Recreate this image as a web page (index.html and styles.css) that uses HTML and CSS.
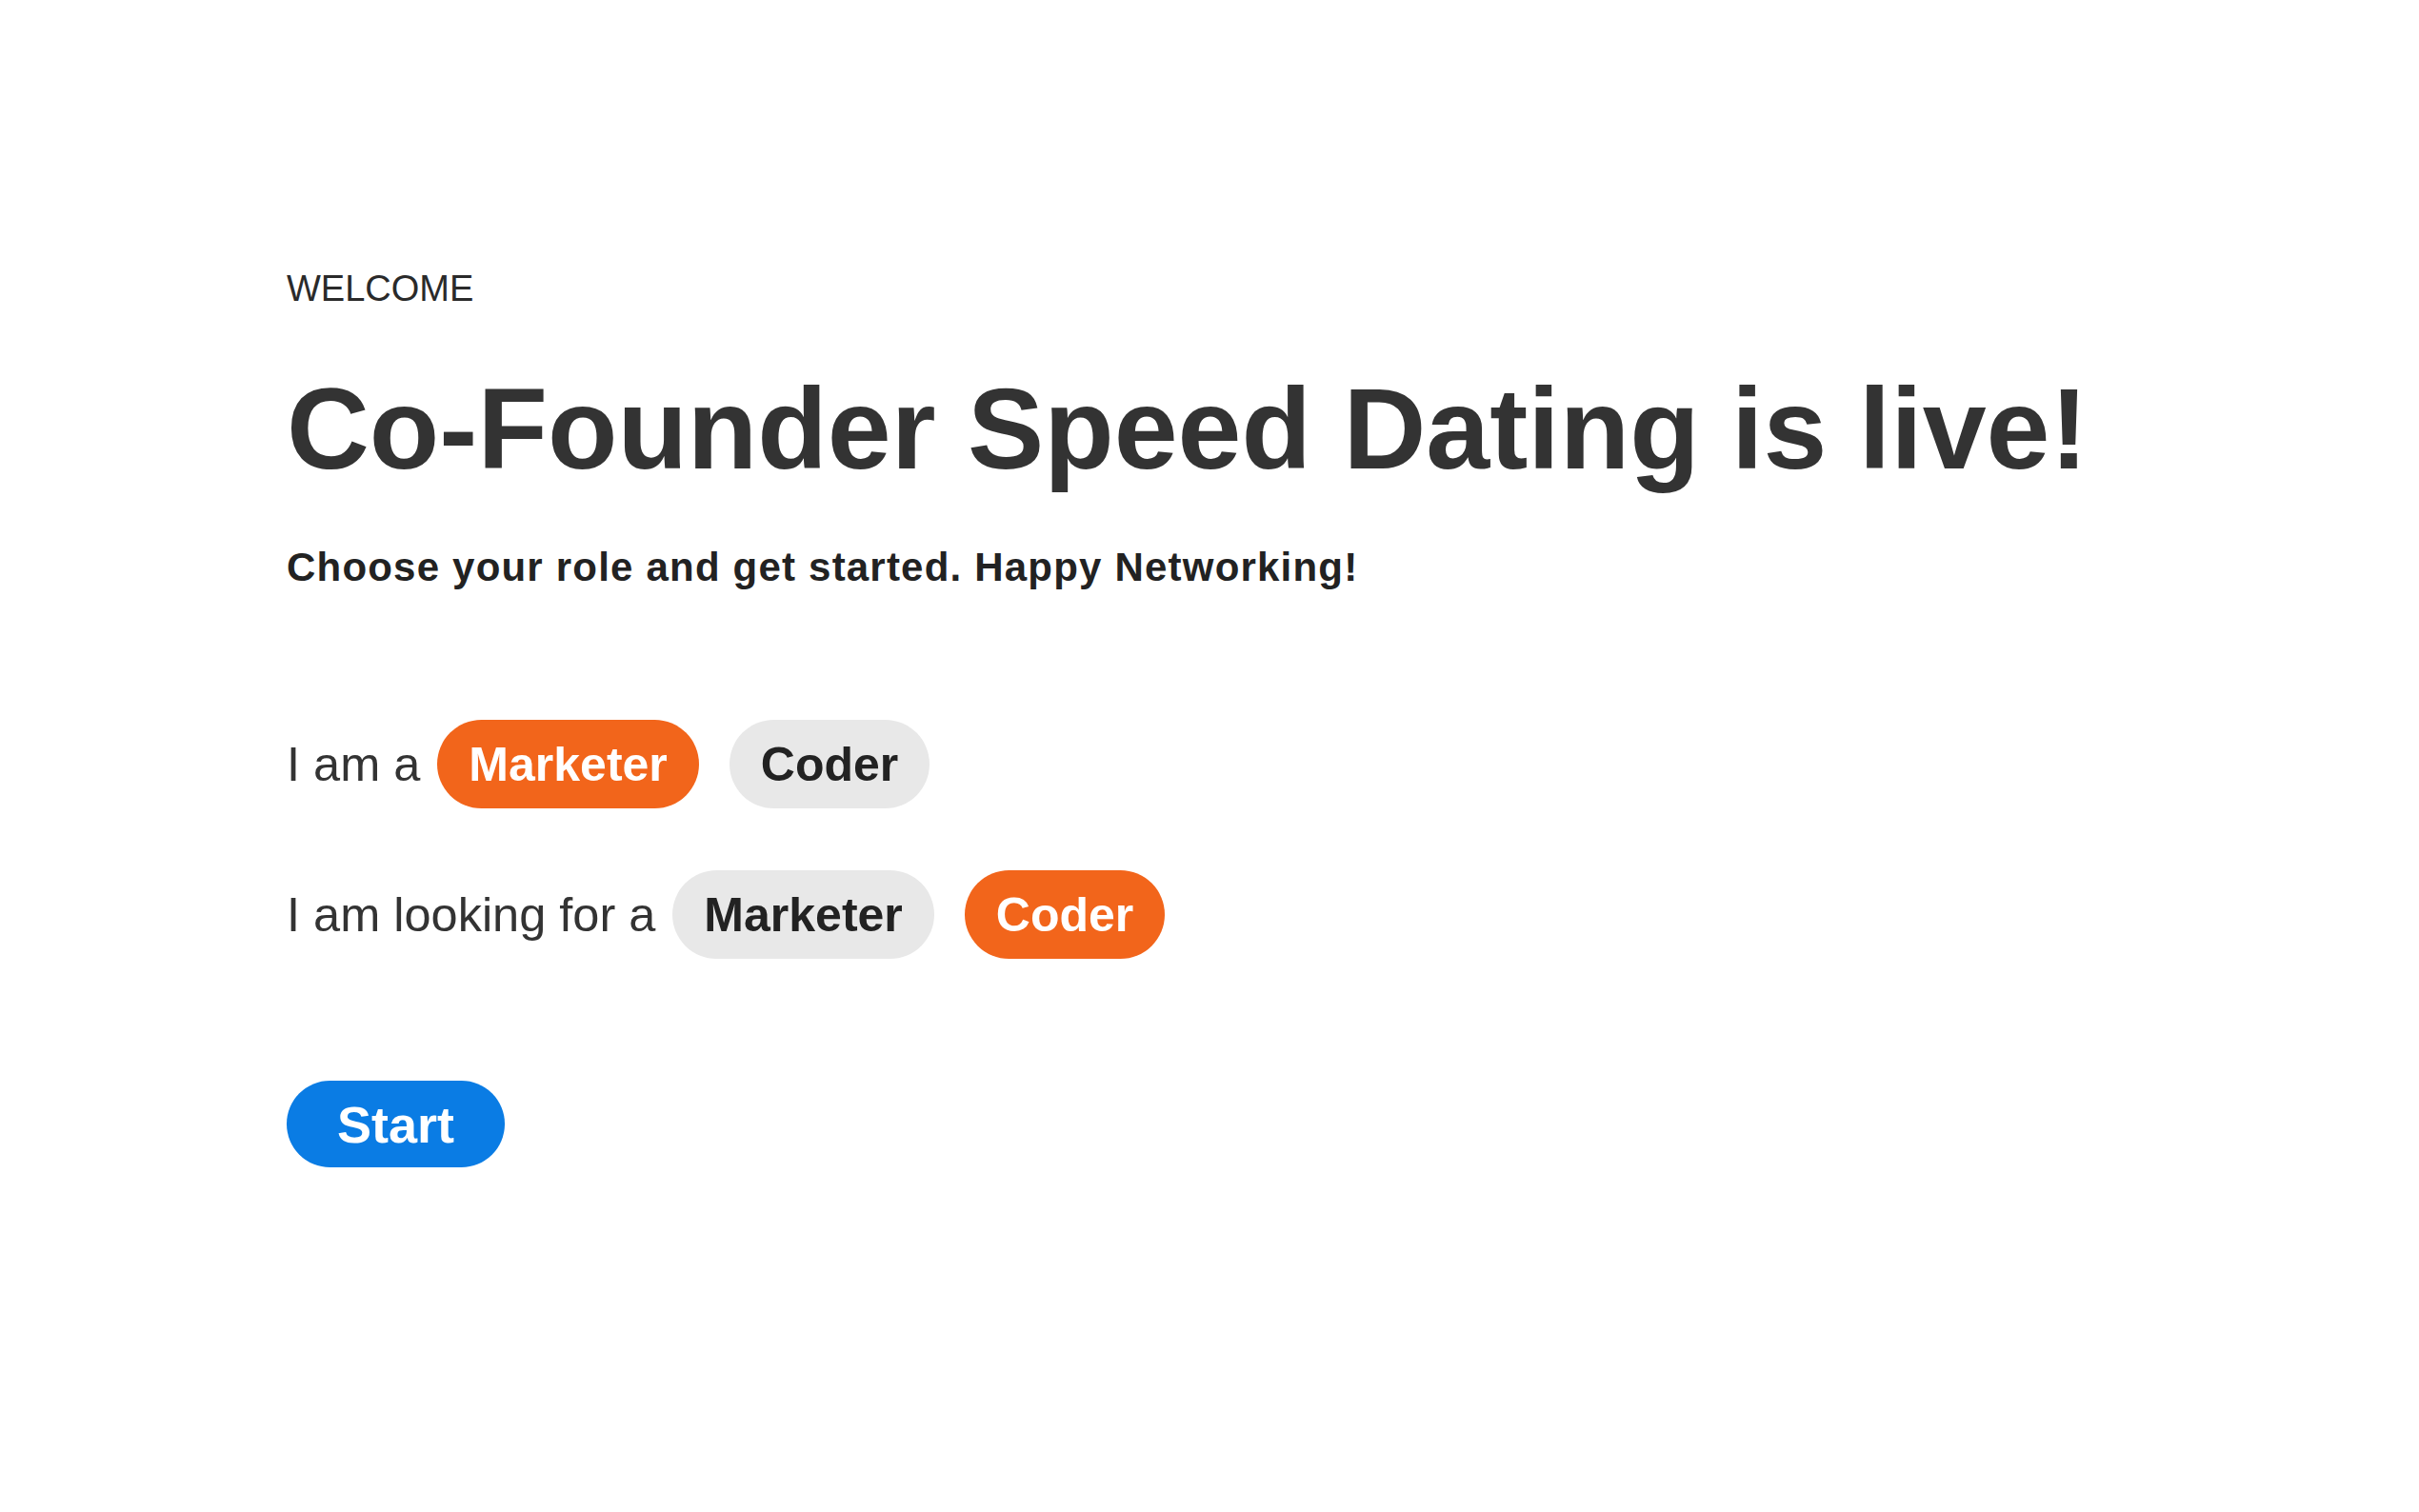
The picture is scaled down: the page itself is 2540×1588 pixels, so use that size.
FILE: index.html
```html
<!DOCTYPE html>
<html lang="en">
<head>
<meta charset="utf-8">
<title>Co-Founder Speed Dating</title>
<link rel="stylesheet" href="styles.css">
</head>
<body>
<main class="page">
  <section class="intro">
    <p class="eyebrow">WELCOME</p>
    <h1 class="title">Co-Founder Speed Dating is live!</h1>
    <p class="subtitle">Choose your role and get started. Happy Networking!</p>
  </section>
  <section class="choices">
    <div class="choice-row">
      <span class="label">I am a</span>
      <button class="pill pill-active">Marketer</button>
      <button class="pill">Coder</button>
    </div>
    <div class="choice-row">
      <span class="label">I am looking for a</span>
      <button class="pill">Marketer</button>
      <button class="pill pill-active">Coder</button>
    </div>
  </section>
  <button class="start">Start</button>
</main>
</body>
</html>
```
FILE: styles.css
```css
html, body {
  margin: 0;
  padding: 0;
  background: #ffffff;
}

body {
  font-family: "Liberation Sans", Arial, sans-serif;
  color: #333333;
}

.page {
  padding: 283px 0 0 301px;
  display: flex;
  flex-direction: column;
  align-items: flex-start;
}

.intro {
  display: flex;
  flex-direction: column;
}

.eyebrow {
  margin: 0;
  font-size: 38px;
  line-height: 40px;
  color: #2a2a2a;
}

.title {
  margin: 62px 0 0 0;
  font-size: 120.3px;
  line-height: 130px;
  font-weight: 700;
  color: #333333;
}

.subtitle {
  margin: 57px 0 0 0;
  font-size: 42px;
  line-height: 48px;
  font-weight: 700;
  letter-spacing: 1.2px;
  color: #222222;
}

.choices {
  margin-top: 136px;
  display: flex;
  flex-direction: column;
  gap: 65px;
}

.choice-row {
  display: flex;
  align-items: center;
}

.label {
  font-size: 50.5px;
  color: #333333;
  margin-right: 18px;
}

.pill {
  font-family: "Liberation Sans", Arial, sans-serif;
  font-size: 50px;
  font-weight: 700;
  height: 93px;
  padding: 0 33px;
  border: none;
  border-radius: 47px;
  background: #e8e8e8;
  color: #222222;
  margin-right: 32px;
  cursor: pointer;
}

.pill-active {
  background: #f2651b;
  color: #ffffff;
}

.start {
  margin-top: 128px;
  font-family: "Liberation Sans", Arial, sans-serif;
  font-size: 54px;
  font-weight: 700;
  height: 91px;
  padding: 0 53px;
  border: none;
  border-radius: 46px;
  background: #0a7ce4;
  color: #ffffff;
  cursor: pointer;
}
```
